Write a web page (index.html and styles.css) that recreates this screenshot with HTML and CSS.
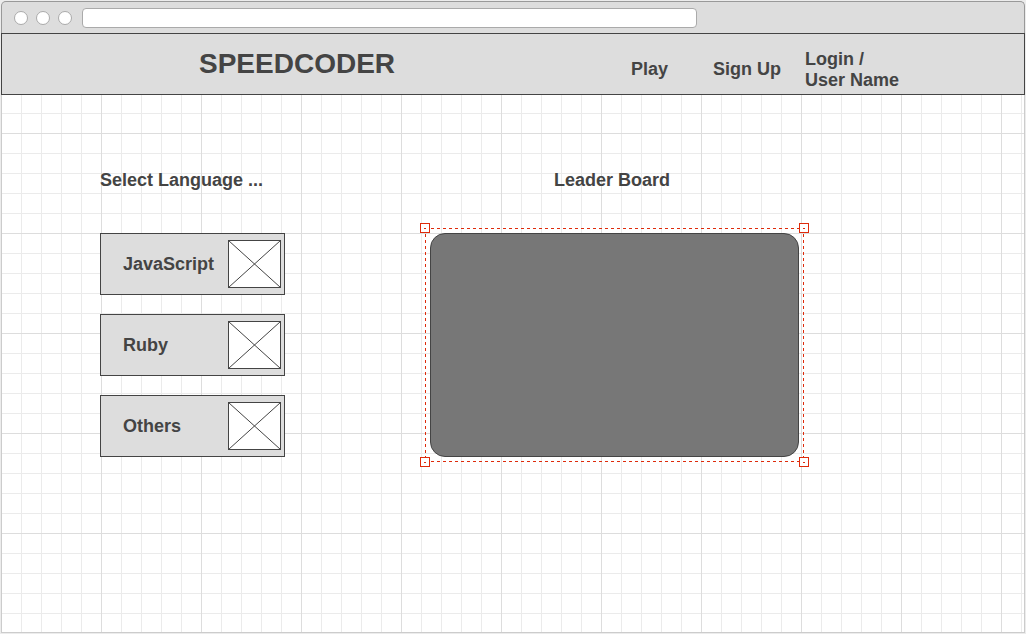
FILE: index.html
```html
<!DOCTYPE html>
<html lang="en">
<head>
<meta charset="utf-8">
<meta name="viewport" content="width=device-width, initial-scale=1">
<title>Speedcoder</title>
<link rel="stylesheet" href="styles.css">
</head>
<body class="page">
<div class="window">
  <div class="chrome">
    <span class="dot"></span>
    <span class="dot"></span>
    <span class="dot"></span>
    <input class="address" type="text" aria-label="Address">
  </div>
  <header class="header">
    <h1 class="brand">SPEEDCODER</h1>
    <nav class="nav">
      <a class="nav-link nav-play" href="#play">Play</a>
      <a class="nav-link nav-signup" href="#signup">Sign Up</a>
      <a class="nav-link" href="#login">Login /<br>User Name</a>
    </nav>
  </header>
  <main class="canvas">
    <section class="languages">
      <h2 class="title">Select Language ...</h2>
      <div class="cards">
        <button class="card" type="button">JavaScript
          <svg class="thumb" viewBox="0 0 53 48" aria-hidden="true"><rect x=".5" y=".5" width="52" height="47"/><path d="M.5 .5L52.5 47.5M52.5 .5L.5 47.5"/></svg>
        </button>
        <button class="card" type="button">Ruby
          <svg class="thumb" viewBox="0 0 53 48" aria-hidden="true"><rect x=".5" y=".5" width="52" height="47"/><path d="M.5 .5L52.5 47.5M52.5 .5L.5 47.5"/></svg>
        </button>
        <button class="card" type="button">Others
          <svg class="thumb" viewBox="0 0 53 48" aria-hidden="true"><rect x=".5" y=".5" width="52" height="47"/><path d="M.5 .5L52.5 47.5M52.5 .5L.5 47.5"/></svg>
        </button>
      </div>
    </section>
    <section class="leaders">
      <h2 class="title title-leaders">Leader Board</h2>
      <div class="selection">
        <div class="board"></div>
        <span class="handle top left"></span>
        <span class="handle top right"></span>
        <span class="handle bottom left"></span>
        <span class="handle bottom right"></span>
      </div>
    </section>
  </main>
</div>
</body>
</html>
```

FILE: styles.css
```css
* {
  box-sizing: border-box;
}

.page {
  margin: 0;
  background: #ececec;
  color: #444;
  font-family: "Liberation Sans", Arial, sans-serif;
  font-size: 18px;
  font-weight: 700;
}

.window {
  display: flex;
  flex-direction: column;
  min-height: 100vh;
  padding: 1px;
}

.chrome {
  display: flex;
  align-items: center;
  gap: 8px;
  height: 32px;
  padding: 1px 12px 0;
  border: 1px solid #999;
  border-bottom: 0;
  border-radius: 5px 5px 0 0;
  background: #ddd;
}

.dot {
  flex: none;
  width: 14px;
  height: 14px;
  border: 1px solid #aaa;
  border-radius: 50%;
  background: #fff;
}

.address {
  flex: 0 1 615px;
  min-width: 0;
  height: 20px;
  margin: 0 0 0 2px;
  padding: 0 6px;
  border: 1px solid #aaa;
  border-radius: 4px;
  background: #fff;
}

.header {
  display: flex;
  justify-content: space-between;
  align-items: center;
  min-height: 62px;
  padding: 0 125px 0 197px;
  border: 1px solid #444;
  background: #ddd;
}

.brand {
  margin: 0;
  font-size: 28px;
  line-height: 32px;
}

.nav {
  display: flex;
  align-items: center;
  padding-top: 11px;
}

.nav-link {
  color: inherit;
  line-height: 21px;
  text-decoration: none;
}

.nav-play {
  margin-right: 45px;
}

.nav-signup {
  margin-right: 24px;
}

.canvas {
  flex: 1;
  display: grid;
  grid-template-columns: 185px 1fr;
  align-items: start;
  gap: 140px;
  padding: 75px 220px 40px 98px;
  border: 1px solid #ccc;
  border-top: 0;
  background-color: #fff;
  background-image:
    linear-gradient(to right, #ddd 1px, transparent 1px),
    linear-gradient(to bottom, #ddd 1px, transparent 1px),
    linear-gradient(to right, #ebebeb 1px, transparent 1px),
    linear-gradient(to bottom, #ebebeb 1px, transparent 1px);
  background-position: -1px 0, 0 38px, -1px 0, 0 18px;
  background-size: 100px 100px, 100px 100px, 20px 20px, 20px 20px;
}

.title {
  margin: 0;
  font-size: 18px;
  line-height: 20px;
}

.title-leaders {
  padding-right: 5px;
  text-align: center;
}

.cards {
  display: flex;
  flex-direction: column;
  gap: 19px;
  margin-top: 43px;
}

.card {
  display: flex;
  justify-content: space-between;
  align-items: center;
  height: 62px;
  padding: 0 3px 0 22px;
  border: 1px solid #444;
  background: #ddd;
  color: inherit;
  font: inherit;
}

.thumb {
  width: 53px;
  height: 48px;
  fill: #fff;
  stroke: #444;
  stroke-width: 1;
}

.selection {
  position: relative;
  margin-top: 38px;
  padding: 5px;
  background-image:
    repeating-linear-gradient(to right, #de2b0b 0 3px, transparent 3px 6px),
    repeating-linear-gradient(to right, #de2b0b 0 3px, transparent 3px 6px),
    repeating-linear-gradient(to bottom, #de2b0b 0 3px, transparent 3px 6px),
    repeating-linear-gradient(to bottom, #de2b0b 0 3px, transparent 3px 6px);
  background-position: top, bottom, left, right;
  background-repeat: no-repeat;
  background-size: 100% 1px, 100% 1px, 1px 100%, 1px 100%;
}

.board {
  height: 224px;
  border: 1px solid #444;
  border-radius: 15px;
  background: #777;
}

.handle {
  position: absolute;
  width: 10px;
  height: 10px;
  border: 1px solid #de2b0b;
  background: #fff;
  background: linear-gradient(#de2b0b, #de2b0b) center / 2px 1px no-repeat #fff;
}

.top {
  top: -5px;
}

.bottom {
  bottom: -5px;
}

.left {
  left: -5px;
}

.right {
  right: -5px;
}
```
